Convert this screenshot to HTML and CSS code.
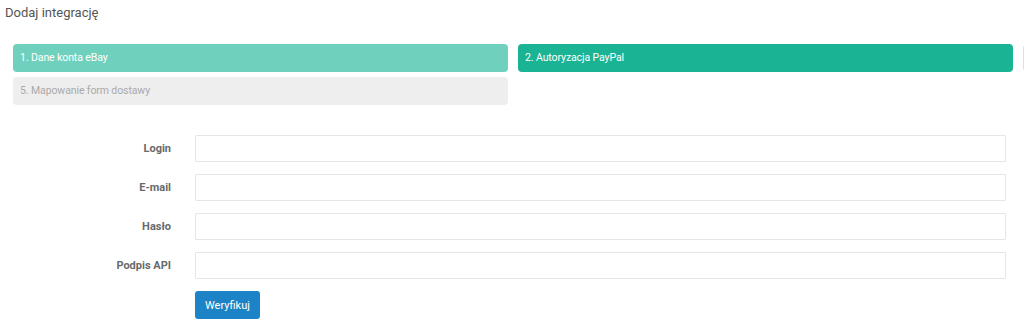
FILE: index.html
```html
<!DOCTYPE html>
<html lang="pl">
<head>
  <meta charset="UTF-8" />
  <title>Dodaj integrację</title>
  <link rel="stylesheet" href="styles.css">
</head>
<body>
  <h1 class="title">Dodaj integrację</h1>

  <div class="steps">
    <div class="step done">1. Dane konta eBay</div>
    <div class="step current">2. Autoryzacja PayPal</div>
    <div class="step next"></div>
    <div class="step disabled">5. Mapowanie form dostawy</div>
  </div>

  <form class="form">
    <label for="login">Login</label>
    <input type="text" id="login" />

    <label for="email">E-mail</label>
    <input type="text" id="email" />

    <label for="haslo">Hasło</label>
    <input type="password" id="haslo" />

    <label for="podpis">Podpis API</label>
    <input type="text" id="podpis" />

    <div></div>
    <div><button type="button" class="btn">Weryfikuj</button></div>
  </form>
</body>
</html>
```

FILE: styles.css
```css
body {
  font-family: Roboto, "Liberation Sans", sans-serif;
  color: #676a6c;
  background-color: #fff;
  margin: 0;
  overflow: hidden;
}

.title {
  margin: 0;
  padding: 4px 0 0 5px;
  font-size: 13px;
  font-weight: normal;
  line-height: 18px;
  color: #555;
}

.steps {
  display: grid;
  grid-template-columns: 495px 495px 495px;
  column-gap: 10px;
  row-gap: 5px;
  margin-top: 22px;
  padding-left: 13px;
  width: 1011px;
  overflow: hidden;
}

.step {
  height: 28px;
  line-height: 28px;
  padding: 0 7px;
  font-size: 10.5px;
  letter-spacing: -0.1px;
  border-radius: 4px;
  white-space: nowrap;
  overflow: hidden;
  box-sizing: border-box;
}

.step.done { background-color: #6fd1bd; color: #fff; }
.step.current { background-color: #1ab394; color: #fff; }
.step.next { background-color: #eee; border: 1px solid #e0e0e0; }
.step.disabled { background-color: #eee; color: #aaa; }

.form {
  display: grid;
  grid-template-columns: 171px 811px;
  column-gap: 24px;
  row-gap: 12px;
  align-items: center;
  margin-top: 30px;
}

.form label {
  text-align: right;
  font-size: 11px;
  font-weight: bold;
  color: #676a6c;
}

.form input {
  height: 27px;
  box-sizing: border-box;
  border: 1px solid #e5e6e7;
  border-radius: 1px;
  padding: 4px 8px;
  font: inherit;
  margin: 0;
}

.btn {
  background-color: #1c84c6;
  color: #fff;
  border: none;
  border-radius: 3px;
  height: 28px;
  padding: 0 10px;
  font-family: inherit;
  font-size: 11px;
  cursor: pointer;
}
```
